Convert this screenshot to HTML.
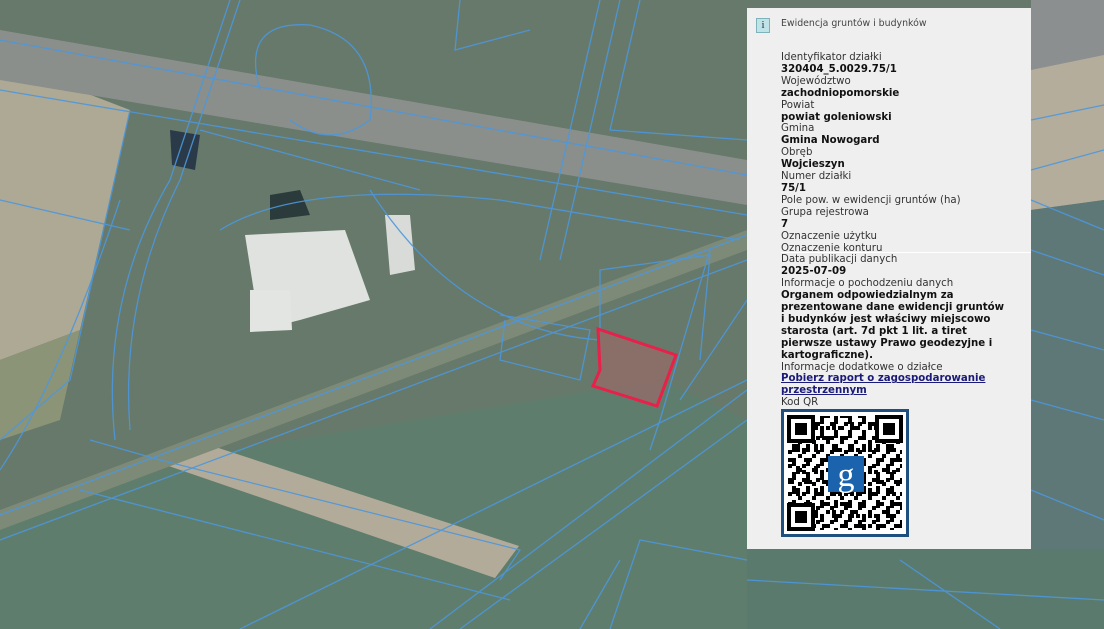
<!DOCTYPE html>
<html><head><meta charset="utf-8"><style>
html,body{margin:0;padding:0;width:1104px;height:629px;overflow:hidden;background:#60795f}
#map{position:absolute;left:0;top:0}
#pop{position:absolute;left:747px;top:8px;width:284px;height:541px;background:#efefef;font-family:"DejaVu Sans","Liberation Sans",sans-serif;font-size:10.2px;color:#333}
#pop .ic{position:absolute;left:9px;top:10px;width:12px;height:13px;background:#bfe3e6;border:1px solid #7fb3bb;font-family:"Liberation Serif",serif;font-size:11px;line-height:13px;text-align:center;color:#234}
#pop .ttl{position:absolute;left:34px;top:10px;font-size:9.4px;color:#444}
#pop .c{position:absolute;left:34px;top:44px;width:246px;line-height:11.9px}
.b{font-weight:bold;color:#111}
a{color:#1a1a7a;font-weight:bold;text-decoration:underline}
.sep{position:absolute;left:34px;right:0;top:244px;border-top:1px solid #fff}
.qr{position:absolute;left:34px;top:401px;width:122px;height:122px;border:3px solid #1f4f7e;background:#fff}
</style></head><body>
<svg id="map" width="1104" height="629" viewBox="0 0 1104 629">
<rect width="1104" height="629" fill="#66796a"/>
<polygon points="0,60 130,110 80,330 0,360" fill="#aea995"/>
<polygon points="0,360 80,330 60,420 0,440" fill="#8c9478"/>
<polygon points="230,450 660,380 747,420 747,629 0,629 0,520" fill="#5f7d6c"/>
<polygon points="157,462 200,442 519,546 495,578" fill="#b3ab99"/>
<polygon points="0,30 747,160 747,205 0,80" fill="#8a8f8c"/>
<polygon points="1031,0 1104,0 1104,60 1031,70" fill="#8b8f90"/>
<polygon points="1031,70 1104,55 1104,200 1031,210" fill="#b4ad9c"/>
<polygon points="1031,210 1104,200 1104,629 1031,629" fill="#5e7877"/>
<polygon points="747,549 1104,549 1104,629 747,629" fill="#5b7a6e"/>
<polygon points="0,510 747,230 747,250 0,530" fill="#7d8a78"/>
<polygon points="245,235 345,230 370,300 300,320 260,330" fill="#dfe2df"/>
<polygon points="250,290 290,290 292,330 250,332" fill="#e3e5e2"/>
<polygon points="385,215 410,215 415,270 390,275" fill="#d8dbd8"/>
<polygon points="270,195 300,190 310,215 270,220" fill="#2b3b3b"/>
<polygon points="170,130 200,135 195,170 172,165" fill="#2a3a48"/>
<g fill="none" stroke="#4d97dc" stroke-width="1.3" opacity=".9">
<path d="M0,40 L747,175"/><path d="M0,90 L747,215"/><path d="M0,200 L130,230"/>
<path d="M0,515 L747,235"/><path d="M0,540 L747,260"/>
<path d="M240,629 L747,380"/><path d="M430,629 L747,390"/><path d="M460,629 L747,420"/>
<path d="M90,440 L160,460 L520,550 L500,580"/><path d="M80,490 L510,600"/>
<path d="M130,110 L70,380 L0,440"/><path d="M120,200 Q60,380 0,470"/>
<path d="M115,440 Q100,300 170,180 L230,0"/><path d="M130,430 Q120,300 180,180 L240,0"/>
<path d="M260,90 Q240,20 310,25 Q380,40 370,120 Q330,150 290,120"/>
<path d="M220,230 Q300,180 500,200 L740,240"/><path d="M540,260 L600,0"/><path d="M560,260 L620,0"/>
<path d="M460,0 L455,50 L530,30"/><path d="M640,0 L610,130 L747,140"/>
<path d="M600,330 L600,270 L710,255 L700,360"/><path d="M500,315 L590,330 L580,380 L500,360 L505,320"/>
<path d="M710,250 L660,420 L650,450"/><path d="M747,300 L680,400"/>
<path d="M370,190 Q460,330 600,340"/><path d="M200,130 L420,190"/>
<path d="M1031,120 L1104,105"/><path d="M1031,170 L1104,150"/><path d="M1031,200 L1104,230"/>
<path d="M1031,250 L1104,275"/><path d="M1031,330 L1104,350"/><path d="M1031,400 L1104,420"/>
<path d="M1031,490 L1104,520"/><path d="M900,560 L1000,629"/><path d="M747,580 L1104,600"/>
<path d="M610,629 L640,540 L747,560"/><path d="M580,629 L620,560"/>
</g>
<polygon points="598,329 676,355 657,406 593,386 600,370" fill="#9a6a68" fill-opacity=".7" stroke="#e8204a" stroke-width="3"/>
</svg>
<div id="pop">
<div class="ic">i</div><div class="ttl">Ewidencja gruntów i budynków</div>
<div class="sep"></div>
<div class="c">
Identyfikator działki<br><span class="b">320404_5.0029.75/1</span><br>
Województwo<br><span class="b">zachodniopomorskie</span><br>
Powiat<br><span class="b">powiat goleniowski</span><br>
Gmina<br><span class="b">Gmina Nowogard</span><br>
Obręb<br><span class="b">Wojcieszyn</span><br>
Numer działki<br><span class="b">75/1</span><br>
Pole pow. w ewidencji gruntów (ha)<br>
Grupa rejestrowa<br><span class="b">7</span><br>
Oznaczenie użytku<br>
Oznaczenie konturu<br>
Data publikacji danych<br><span class="b">2025-07-09</span><br>
Informacje o pochodzeniu danych<br>
<span class="b">Organem odpowiedzialnym za<br>prezentowane dane ewidencji gruntów<br>i budynków jest właściwy miejscowo<br>starosta (art. 7d pkt 1 lit. a tiret<br>pierwsze ustawy Prawo geodezyjne i<br>kartograficzne).</span><br>
Informacje dodatkowe o działce<br>
<a>Pobierz raport o zagospodarowanie<br>przestrzennym</a><br>
Kod QR
</div>
<div class="qr"><svg width="122" height="122" viewBox="0 0 122 122">
<defs>
<pattern id="p1" width="14" height="14" patternUnits="userSpaceOnUse"><rect x="0" y="0" width="4" height="4"/><rect x="8" y="4" width="4" height="8"/><rect x="4" y="10" width="4" height="4"/></pattern>
<pattern id="p2" width="18" height="22" patternUnits="userSpaceOnUse"><rect x="2" y="2" width="8" height="4"/><rect x="12" y="10" width="4" height="8"/><rect x="0" y="14" width="4" height="4"/></pattern>
</defs>
<rect x="4" y="4" width="114" height="114" fill="url(#p1)"/>
<rect x="4" y="4" width="114" height="114" fill="url(#p2)"/>
<g><rect x="3" y="3" width="28" height="28" fill="#fff"/><rect x="5" y="5" width="24" height="24" fill="none" stroke="#000" stroke-width="4"/><rect x="11" y="11" width="12" height="12"/>
<rect x="91" y="3" width="28" height="28" fill="#fff"/><rect x="93" y="5" width="24" height="24" fill="none" stroke="#000" stroke-width="4"/><rect x="99" y="11" width="12" height="12"/>
<rect x="3" y="91" width="28" height="28" fill="#fff"/><rect x="5" y="93" width="24" height="24" fill="none" stroke="#000" stroke-width="4"/><rect x="11" y="99" width="12" height="12"/></g>
<rect x="44" y="44" width="36" height="36" fill="#1b63ad"/>
<text x="62" y="74" font-family="Liberation Serif,serif" font-size="34" fill="#fff" text-anchor="middle">g</text>
</svg></div>
</div>
</body></html>
